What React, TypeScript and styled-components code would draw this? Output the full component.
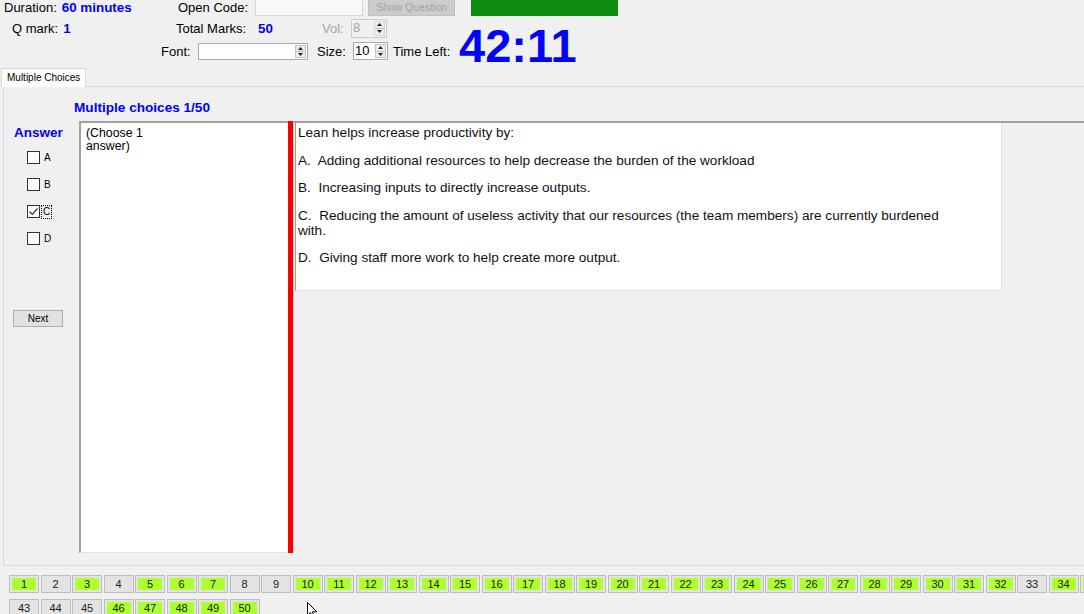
import React from "react";
import styled, { createGlobalStyle } from "styled-components";

const GlobalStyle = createGlobalStyle`
  html, body { margin: 0; padding: 0; background: #f0f0f0; overflow: hidden; }
  body { font-family: "Liberation Sans", Arial, sans-serif; font-size: 13px; color: #000; }
  #root { width: 1084px; height: 614px; overflow: hidden; position: relative; }
  * { box-sizing: border-box; }
`;

const Header = styled.header`
  display: flex;
  height: 70px;
  margin-top: -2px;
`;

const LeftBlock = styled.div`
  display: flex;
  flex-direction: column;
  width: 459px;
  flex-shrink: 0;
`;

const Row = styled.div<{ $top?: number; $pl?: number }>`
  display: flex;
  align-items: center;
  height: 18px;
  margin-top: ${(p) => p.$top ?? 0}px;
  padding-left: ${(p) => p.$pl ?? 0}px;
`;

const Slot = styled.span<{ $w: number; $ml?: number }>`
  display: flex;
  align-items: center;
  width: ${(p) => p.$w}px;
  margin-left: ${(p) => p.$ml ?? 0}px;
  flex-shrink: 0;
  white-space: nowrap;
`;

const Label = styled.span<{ $muted?: boolean }>`
  font-size: 13px;
  color: ${(p) => (p.$muted ? "#a3a3a3" : "#000")};
  white-space: nowrap;
`;

const Value = styled.span<{ $ml?: number }>`
  font-size: 13.4px;
  font-weight: bold;
  color: #0000ff;
  margin-left: ${(p) => p.$ml ?? 0}px;
`;

const TextBox = styled.span<{ $w: number }>`
  display: block;
  width: ${(p) => p.$w}px;
  height: 18px;
  border: 1px solid #d6d6d6;
  background: #f8f8f8;
  flex-shrink: 0;
`;

const DisabledButton = styled.span`
  display: flex;
  align-items: center;
  justify-content: center;
  width: 87px;
  height: 18px;
  margin-left: 5px;
  background: #cccccc;
  border: 1px solid #bfbfbf;
  color: #a3a3a3;
  font-size: 10.5px;
  flex-shrink: 0;
`;

const SpinBox = styled.span<{ $w: number; $disabled?: boolean; $h?: number }>`
  display: flex;
  width: ${(p) => p.$w}px;
  height: ${(p) => p.$h ?? 18}px;
  border: 1px solid ${(p) => (p.$disabled ? "#cccccc" : "#a9a9a9")};
  background: ${(p) => (p.$disabled ? "#f0f0f0" : "#ffffff")};
  flex-shrink: 0;
`;

const SpinText = styled.span<{ $disabled?: boolean }>`
  flex: 1;
  font-size: 13px;
  line-height: 16px;
  padding-left: 1px;
  color: ${(p) => (p.$disabled ? "#a3a3a3" : "#000")};
`;

const SpinButtons = styled.span<{ $disabled?: boolean }>`
  width: 11px;
  margin: 1px;
  display: flex;
  flex-direction: column;
  background: #ececec;
  border: 1px solid ${(p) => (p.$disabled ? "#dadada" : "#c4c4c4")};
`;

const SpinHalf = styled.span`
  flex: 1;
  display: flex;
  align-items: center;
  justify-content: center;
  & + & {
    border-top: 1px solid #c4c4c4;
  }
`;

const RightBlock = styled.div`
  display: flex;
  flex-direction: column;
`;

const GreenBar = styled.div`
  width: 147px;
  height: 18px;
  margin-left: 12px;
  background: #0f8c0f;
`;

const Timer = styled.div`
  margin-top: 9px;
  font-size: 47px;
  line-height: 42px;
  font-weight: bold;
  color: #0000ff;
`;

const TabStrip = styled.div`
  display: flex;
  padding-left: 1px;
  height: 18px;
  position: relative;
  z-index: 1;
`;

const Tab = styled.div`
  width: 85px;
  height: 19px;
  border: 1px solid #d9d9d9;
  border-bottom: none;
  background: #ffffff;
  font-size: 10px;
  line-height: 17px;
  padding-left: 5px;
  white-space: nowrap;
`;

const Panel = styled.section`
  margin-left: 3px;
  width: 1200px;
  height: 480px;
  border: 1px solid #d9d9d9;
  padding-top: 13px;
`;

const Title = styled.div`
  margin-left: 70px;
  font-size: 13.6px;
  line-height: 15px;
  font-weight: bold;
  color: #0000ff;
`;

const Content = styled.div`
  display: flex;
  margin-top: 6px;
  height: 432px;
`;

const AnswerColumn = styled.div`
  width: 75px;
  flex-shrink: 0;
  display: flex;
  flex-direction: column;
`;

const AnswerHeading = styled.div`
  margin-top: 4px;
  padding-left: 10px;
  font-size: 13.5px;
  line-height: 16px;
  font-weight: bold;
  color: #0000ff;
`;

const Options = styled.div`
  margin-top: 3px;
  display: flex;
  flex-direction: column;
`;

const Option = styled.div`
  display: flex;
  align-items: center;
  height: 27px;
  padding-left: 23px;
`;

const Box = styled.span`
  display: flex;
  width: 13px;
  height: 13px;
  border: 1px solid #333;
  background: #fff;
  flex-shrink: 0;
`;

const OptionLetter = styled.span<{ $focus?: boolean }>`
  font-size: 10px;
  line-height: 12px;
  margin-left: ${(p) => (p.$focus ? 1 : 3)}px;
  padding: 0 ${(p) => (p.$focus ? 1 : 0)}px;
  border: 1px ${(p) => (p.$focus ? "dotted #000" : "solid transparent")};
`;

const NextButton = styled.div`
  margin: 58px 0 0 9px;
  width: 50px;
  height: 17px;
  border: 1px solid #adadad;
  background: #e1e1e1;
  font-size: 10px;
  line-height: 15px;
  text-align: center;
`;

const ChoiceBox = styled.div`
  width: 209px;
  flex-shrink: 0;
  background: #fff;
  border-top: 2px solid #a0a0a0;
  border-left: 2px solid #a0a0a0;
  border-bottom: 1px solid #e3e3e3;
  padding: 4px 5px;
  font-size: 12.3px;
  line-height: 13px;
`;

const RedBar = styled.div`
  width: 5px;
  flex-shrink: 0;
  background: #ff0000;
`;

const QuestionArea = styled.div`
  flex: 1;
  border-top: 2px solid #a0a0a0;
  border-left: 1px solid #d6d6d6;
  padding-left: 1px;
`;

const QuestionBox = styled.div`
  width: 707px;
  height: 168px;
  background: #fff;
  border-left: 1px solid #a0a0a0;
  border-right: 1px solid #e3e3e3;
  border-bottom: 1px solid #e3e3e3;
  padding: 2px 2px;
`;

const Para = styled.p`
  margin: 0 0 12.5px;
  font-size: 13.6px;
  line-height: 15px;
  color: #111;
  white-space: pre-wrap;
`;

const NumberGrid = styled.div`
  display: grid;
  grid-template-columns: repeat(42, 30px);
  column-gap: 1.5px;
  row-gap: 6px;
  margin-top: 9px;
  padding-left: 9px;
`;

const NumButton = styled.div`
  width: 30px;
  height: 18px;
  border: 1px solid #bdbdbd;
  background: #e3e3e3;
  padding: 2px;
`;

const NumFill = styled.div<{ $done: boolean }>`
  width: 100%;
  height: 100%;
  background: ${(p) => (p.$done ? "#adff2f" : "transparent")};
  font-size: 11px;
  line-height: 12px;
  text-align: center;
  color: #1a1a1a;
`;

const Cursor = styled.svg`
  position: absolute;
  left: 307px;
  top: 602px;
`;

const Arrow = ({ up }: { up: boolean }) => (
  <svg width="5" height="3" viewBox="0 0 5 3">
    <path d={up ? "M0 3 L2.5 0 L5 3 Z" : "M0 0 L2.5 3 L5 0 Z"} fill="#222" />
  </svg>
);

const Spinner = ({ w, value, disabled, h }: { w: number; value: string; disabled?: boolean; h?: number }) => (
  <SpinBox $w={w} $disabled={disabled} $h={h}>
    <SpinText $disabled={disabled}>{value}</SpinText>
    <SpinButtons $disabled={disabled}>
      <SpinHalf>
        <Arrow up />
      </SpinHalf>
      <SpinHalf>
        <Arrow up={false} />
      </SpinHalf>
    </SpinButtons>
  </SpinBox>
);

const notDone = new Set([2, 4, 8, 9, 33, 43, 44, 45]);
const numbers = Array.from({ length: 50 }, (_, i) => i + 1);

const options = [
  { l: "A", checked: false },
  { l: "B", checked: false },
  { l: "C", checked: true },
  { l: "D", checked: false },
];

export default function App() {
  return (
    <>
      <GlobalStyle />
      <Header>
        <LeftBlock>
          <Row $pl={4}>
            <Slot $w={174}>
              <Label>Duration:</Label>
              <Value $ml={5}>60 minutes</Value>
            </Slot>
            <Slot $w={77}>
              <Label>Open Code:</Label>
            </Slot>
            <TextBox $w={108} />
            <DisabledButton>Show Question</DisabledButton>
          </Row>
          <Row $top={3} $pl={12}>
            <Slot $w={164}>
              <Label>Q mark:</Label>
              <Value $ml={5}>1</Value>
            </Slot>
            <Slot $w={82}>
              <Label>Total Marks:</Label>
            </Slot>
            <Slot $w={64}>
              <Value>50</Value>
            </Slot>
            <Slot $w={29}>
              <Label $muted>Vol:</Label>
            </Slot>
            <Spinner w={36} value="8" disabled h={19} />
          </Row>
          <Row $top={5} $pl={161}>
            <Slot $w={37}>
              <Label>Font:</Label>
            </Slot>
            <Spinner w={110} value="" h={17} />
            <Slot $w={36} $ml={9}>
              <Label>Size:</Label>
            </Slot>
            <Spinner w={35} value="10" />
            <Slot $w={60} $ml={5}>
              <Label>Time Left:</Label>
            </Slot>
          </Row>
        </LeftBlock>
        <RightBlock>
          <GreenBar />
          <Timer>42:11</Timer>
        </RightBlock>
      </Header>

      <TabStrip>
        <Tab>Multiple Choices</Tab>
      </TabStrip>
      <Panel>
        <Title>Multiple choices 1/50</Title>
        <Content>
          <AnswerColumn>
            <AnswerHeading>Answer</AnswerHeading>
            <Options>
              {options.map((o) => (
                <Option key={o.l}>
                  <Box>
                    {o.checked && (
                      <svg width="11" height="11" viewBox="0 0 11 11">
                        <path d="M1.5 5.5 L4.3 8.3 L9.5 2.5" fill="none" stroke="#333" strokeWidth="1.2" />
                      </svg>
                    )}
                  </Box>
                  <OptionLetter $focus={o.checked}>{o.l}</OptionLetter>
                </Option>
              ))}
            </Options>
            <NextButton>Next</NextButton>
          </AnswerColumn>
          <ChoiceBox>
            (Choose 1
            <br />
            answer)
          </ChoiceBox>
          <RedBar />
          <QuestionArea>
            <QuestionBox>
              <Para>Lean helps increase productivity by:</Para>
              <Para>A.  Adding additional resources to help decrease the burden of the workload</Para>
              <Para>B.  Increasing inputs to directly increase outputs.</Para>
              <Para>
                C.  Reducing the amount of useless activity that our resources (the team members) are currently burdened
                <br />
                with.
              </Para>
              <Para>D.  Giving staff more work to help create more output.</Para>
            </QuestionBox>
          </QuestionArea>
        </Content>
      </Panel>

      <NumberGrid>
        {numbers.map((n) => (
          <NumButton key={n}>
            <NumFill $done={!notDone.has(n)}>{n}</NumFill>
          </NumButton>
        ))}
      </NumberGrid>

      <Cursor width="11" height="17" viewBox="0 0 11 17">
        <path d="M0.5 0.5 L0.5 13.5 L3.5 10.5 L5.8 15.8 L7.6 15 L5.4 9.8 L9.8 9.8 Z" fill="#fff" stroke="#000" strokeWidth="1" />
      </Cursor>
    </>
  );
}
